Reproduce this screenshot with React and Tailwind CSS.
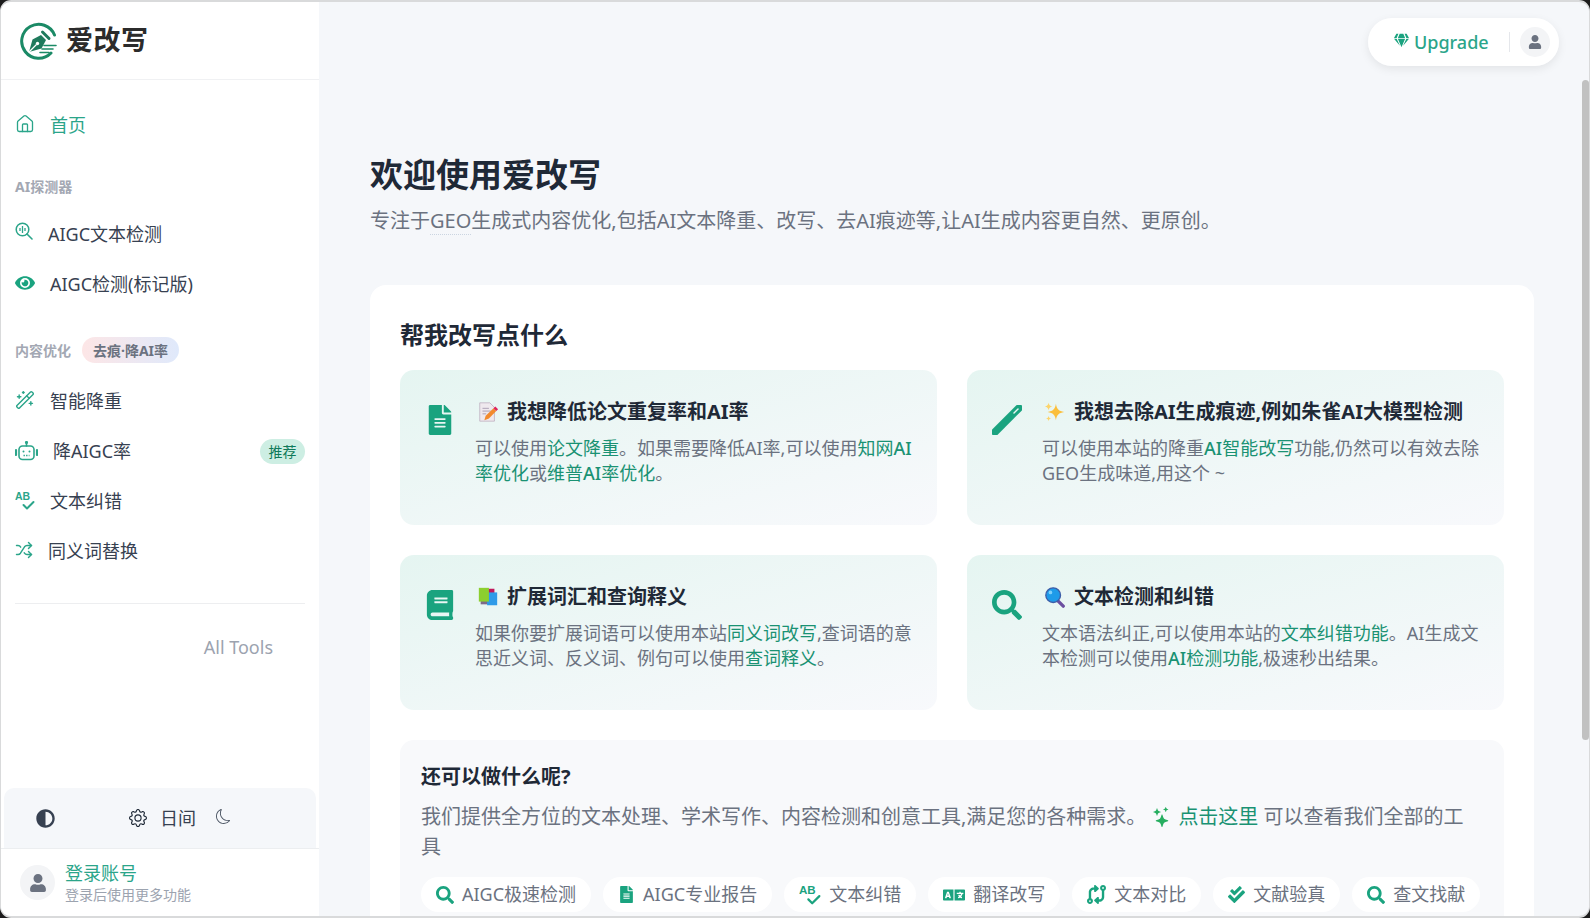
import React from 'react';
import { FaFileAlt, FaBook, FaSearch, FaEye, FaAdjust, FaUser, FaGem, FaLanguage, FaCheckDouble } from 'react-icons/fa';
import { FaCodeCompare } from 'react-icons/fa6';
import { BsGear, BsMoon, BsStars } from 'react-icons/bs';
import { WandSparkles, Shuffle, House } from 'lucide-react';

const G = '#1aa37f';

function Logo() {
  return (
    <svg viewBox="0 0 38 38" className="w-[38px] h-[38px] shrink-0">
      <path d="M34.5 13 A17 17 0 1 0 31 31" fill="none" stroke="#1b8a66" strokeWidth="3" strokeLinecap="round" />
      <path d="M9 30 L12.5 17.5 L21 13 L26 18 L21.5 26.5 Z" fill="#1f7a5c" />
      <path d="M9 30 L16.5 22.5" stroke="#fff" strokeWidth="1.2" />
      <circle cx="17.5" cy="21.5" r="1.7" fill="#fff" />
      <path d="M22.5 10 L29 16.5" stroke="#1f7a5c" strokeWidth="3" strokeLinecap="round" />
      <path d="M24 23.5 H36 M22 27 H33 M20 30.5 H29" stroke="#1b8a66" strokeWidth="1.6" strokeLinecap="round" />
    </svg>
  );
}

function ZoomIcon() {
  return (
    <svg viewBox="0 0 18 18" className="w-[18px] h-[18px] shrink-0 -mt-[6px]" fill="none" stroke="#2ba58a">
      <circle cx="7.5" cy="7.5" r="6.3" strokeWidth="1.5" />
      <path d="M12 12 L17 17" strokeWidth="1.6" strokeLinecap="round" />
      <path d="M7.5 4 V11 M5 6 V9 M10 6 V9" strokeWidth="1.3" />
    </svg>
  );
}

function BotIcon() {
  return (
    <svg viewBox="0 0 23 20" className="w-[23px] h-[20px] shrink-0" fill="none" stroke="#2ba58a" strokeWidth="1.6">
      <rect x="4" y="5" width="15" height="13.5" rx="3.5" />
      <path d="M11.5 5 V1.8" strokeLinecap="round" />
      <circle cx="11.5" cy="1.5" r="0.8" fill="#2ba58a" />
      <path d="M1 9 V14 M22 9 V14" strokeWidth="2.2" strokeLinecap="round" />
      <circle cx="8.5" cy="10.5" r="1" fill="#2ba58a" stroke="none" />
      <circle cx="14.5" cy="10.5" r="1" fill="#2ba58a" stroke="none" />
      <path d="M8.5 14.5 H14.5" strokeDasharray="1.4 1.2" />
    </svg>
  );
}

function AbIcon({ size = 20, color = '#2ba58a' }) {
  return (
    <svg viewBox="0 0 20 20" width={size} height={size} className="shrink-0">
      <text x="0" y="9" fontSize="10.5" fontWeight="700" fill={color} fontFamily="'Liberation Sans', sans-serif">AB</text>
      <path d="M8.5 14 L12 17.5 L18.5 11" fill="none" stroke={color} strokeWidth="2" strokeLinecap="round" strokeLinejoin="round" />
    </svg>
  );
}

function NavItem({ icon, label, right, active }) {
  return (
    <div className="h-[50px] flex items-center gap-[15px]">
      {icon}
      <span className={`text-[18px] ${active ? 'text-[#2ba58a]' : 'text-[#374151]'}`}>{label}</span>
      {right}
    </div>
  );
}

function PenIcon() {
  return (
    <svg viewBox="0 0 30 30" className="w-[30px] h-[30px] shrink-0 mt-[7px]">
      <path d="M3 27 L27 3" stroke={G} strokeWidth="7.5" strokeLinecap="round" />
      <path d="M22 8 L26 4" stroke="#e8f6f2" strokeWidth="1.5" strokeLinecap="round" />
    </svg>
  );
}

function MemoEmoji() {
  return (
    <svg viewBox="0 0 26 24" className="w-[26px] h-[22px] shrink-0">
      <path d="M4 2 H15 L20 7 V22 H4 Z" fill="#efe9ee" stroke="#b9a9bb" strokeWidth="0.8" />
      <path d="M7 8 H14 M7 11 H16 M7 14 H11" stroke="#a99bb2" strokeWidth="1" />
      <path d="M9 21 L10.5 16 L19 8 L22 11 L14 19 Z" fill="#f28a2e" />
      <path d="M19 8 L21 6 L24 9 L22 11 Z" fill="#e0245e" />
    </svg>
  );
}

function SparkEmoji() {
  return (
    <svg viewBox="0 0 26 24" className="w-[26px] h-[22px] shrink-0" fill="#fbbf3c">
      <path d="M14 3 C15 9 17 11 23 12 C17 13 15 15 14 21 C13 15 11 13 5 12 C11 11 13 9 14 3 Z" />
      <path d="M6 2 C6.5 4.5 7.5 5.5 10 6 C7.5 6.5 6.5 7.5 6 10 C5.5 7.5 4.5 6.5 2 6 C4.5 5.5 5.5 4.5 6 2 Z" fill="#fcd46a" />
      <path d="M6 16 C6.4 18 7 18.6 9 19 C7 19.4 6.4 20 6 22 C5.6 20 5 19.4 3 19 C5 18.6 5.6 18 6 16 Z" fill="#fcd46a" />
    </svg>
  );
}

function BooksEmoji() {
  return (
    <svg viewBox="0 0 26 24" className="w-[26px] h-[22px] shrink-0">
      <rect x="9" y="3" width="11" height="15" fill="#c2185b" />
      <rect x="5" y="14" width="14" height="6" fill="#7d6b8a" />
      <rect x="12" y="7" width="11" height="14" fill="#2f9be8" />
      <rect x="3" y="2" width="11" height="15" fill="#8ccf2f" />
    </svg>
  );
}

function LensEmoji() {
  return (
    <svg viewBox="0 0 26 24" className="w-[26px] h-[22px] shrink-0">
      <path d="M14 14 L22 22" stroke="#6b4fa0" strokeWidth="3.6" strokeLinecap="round" />
      <circle cx="11" cy="10" r="8" fill="#1e9be9" stroke="#3d5ea8" strokeWidth="1.5" />
      <circle cx="8" cy="7" r="2" fill="#7fd0fa" />
    </svg>
  );
}

const L = ({ children }) => <span className="text-[#1a9273]">{children}</span>;
const LB = ({ children }) => <span className="text-[#1a9273] font-medium">{children}</span>;

function Feature({ icon, emoji, title, children }) {
  return (
    <div className="h-[155px] rounded-[14px] bg-linear-to-br from-[#e5f5f1] to-[#f8f9fc] pl-[25px] pr-[20px] pt-[28px] flex gap-[20px]">
      {icon}
      <div className="min-w-0">
        <div className="flex items-center h-[28px] gap-[6px]">
          {emoji}
          <span className="text-[20px] font-bold text-[#1f2937] whitespace-nowrap">{title}</span>
        </div>
        <p className="mt-[10px] text-[18px] leading-[25px] text-[#6b7280]">{children}</p>
      </div>
    </div>
  );
}

function Pill({ icon, label }) {
  return (
    <div className="h-[35px] rounded-full bg-white px-[15px] flex items-center gap-[8px] whitespace-nowrap">
      {icon}
      <span className="text-[18px] text-[#6b7280]">{label}</span>
    </div>
  );
}

export default function App() {
  return (
    <div className="h-[918px] w-[1590px] bg-[#1c1c1c] overflow-hidden font-['Noto_Sans','Noto_Sans_CJK_SC',sans-serif]">
      <div className="relative h-full rounded-[11px] border-y-2 border-x border-[#d9dadb] overflow-hidden flex bg-[#f5f7fa]">
        <aside className="w-[318px] shrink-0 h-full bg-white flex flex-col">
          <div className="h-[78px] shrink-0 border-b border-[#f0f1f3] flex items-center pl-[19px] gap-[8px]">
            <Logo />
            <span className="text-[27px] font-bold text-[#2b2b2b] tracking-[0.5px]">爱改写</span>
          </div>
          <nav className="px-[14px] pt-[20px] flex flex-col">
            <NavItem active label="首页" icon={<House size={20} color="#2ba58a" strokeWidth={1.6} className="shrink-0 -mt-[2px]" />} />
            <div className="mt-[26px] mb-[13px] h-[20px] flex items-center text-[14px] font-bold text-[#a3a8b3]">AI探测器</div>
            <NavItem label="AIGC文本检测" icon={<ZoomIcon />} />
            <NavItem label="AIGC检测(标记版)" icon={<FaEye size={20} color={G} className="shrink-0 -mt-[2px]" />} />
            <div className="mt-[28px] mb-[13px] h-[26px] flex items-center gap-[11px]">
              <span className="text-[14px] font-bold text-[#a3a8b3]">内容优化</span>
              <span className="h-[26px] px-[11px] rounded-full bg-linear-to-r from-[#fde6e6] to-[#dfe9fb] flex items-center text-[14px] font-bold text-[#6b7280]">去痕·降AI率</span>
            </div>
            <NavItem label="智能降重" icon={<WandSparkles size={20} color="#2ba58a" strokeWidth={1.7} className="shrink-0 -mt-[2px]" />} />
            <NavItem label="降AIGC率" icon={<BotIcon />} right={<span className="ml-auto h-[25px] w-[45px] rounded-full bg-[#cdeee3] text-[#0f7a5a] text-[14px] flex items-center justify-center">推荐</span>} />
            <NavItem label="文本纠错" icon={<AbIcon />} />
            <NavItem label="同义词替换" icon={<Shuffle size={18} color="#2ba58a" strokeWidth={1.9} className="shrink-0 -mt-[2px]" />} />
            <div className="mt-[27px] h-px bg-[#edeef0]" />
            <div className="mt-[31px] h-[24px] pr-[32px] flex items-center justify-end text-[18px] text-[#9ca3af]">All Tools</div>
          </nav>
          <div className="mt-auto">
            <div className="mx-[3px] h-[60px] rounded-t-[10px] bg-[#f5f7fa] flex items-center text-[#374151]">
              <FaAdjust size={19} className="ml-[32px] text-[#374151]" />
              <BsGear size={18} className="ml-[74px] text-[#1f2937]" />
              <span className="ml-[13px] text-[18px]">日间</span>
              <BsMoon size={15} className="ml-[20px] text-[#4b5563] -mt-[3px]" />
            </div>
            <div className="h-[68px] border-t border-[#eceef0] pl-[19px] flex items-center gap-[10px]">
              <div className="w-[35px] h-[35px] rounded-full bg-[#f3f4f6] flex items-center justify-center">
                <FaUser size={18} color="#6b7280" />
              </div>
              <div className="flex flex-col">
                <span className="text-[18px] leading-[24px] text-[#2ba58a]">登录账号</span>
                <span className="text-[14px] leading-[20px] text-[#9ca3af]">登录后使用更多功能</span>
              </div>
            </div>
          </div>
        </aside>

        <main className="flex-1 min-w-0 h-full overflow-hidden pl-[51px] pr-[55px] pt-[151px]">
          <h1 className="text-[33px] leading-[44px] font-bold text-[#1f2937]">欢迎使用爱改写</h1>
          <p className="mt-[9px] text-[20px] leading-[30px] text-[#6b7280] whitespace-nowrap">
            专注于<span className="border-b border-dotted border-[#cbd5e1]">GEO</span>生成式内容优化,包括AI文本降重、改写、去AI痕迹等,让AI生成内容更自然、更原创。
          </p>
          <section className="mt-[49px] rounded-t-[16px] bg-white px-[30px] pt-[30px]">
            <h2 className="h-[40px] flex items-center text-[24px] font-bold text-[#1f2937]">帮我改写点什么</h2>
            <div className="mt-[15px] grid grid-cols-2 gap-[30px]">
              <Feature icon={<FaFileAlt size={30} color={G} className="shrink-0 mt-[7px]" />} emoji={<MemoEmoji />} title="我想降低论文重复率和AI率">
                可以使用<L>论文降重</L>。如果需要降低AI率,可以使用<L>知网</L><LB>AI</LB><L>率优化</L>或<L>维普</L><LB>AI</LB><L>率优化</L>。
              </Feature>
              <Feature icon={<PenIcon />} emoji={<SparkEmoji />} title="我想去除AI生成痕迹,例如朱雀AI大模型检测">
                可以使用本站的降重<LB>AI</LB><L>智能改写</L>功能,仍然可以有效去除GEO生成味道,用这个 ~
              </Feature>
              <Feature icon={<FaBook size={30} color={G} className="shrink-0 mt-[7px]" />} emoji={<BooksEmoji />} title="扩展词汇和查询释义">
                如果你要扩展词语可以使用本站<L>同义词改写</L>,查词语的意思近义词、反义词、例句可以使用<L>查词释义</L>。
              </Feature>
              <Feature icon={<FaSearch size={30} color={G} className="shrink-0 mt-[7px]" />} emoji={<LensEmoji />} title="文本检测和纠错">
                文本语法纠正,可以使用本站的<L>文本纠错功能</L>。AI生成文本检测可以使用<LB>AI</LB><L>检测功能</L>,极速秒出结果。
              </Feature>
            </div>
            <div className="mt-[30px] rounded-[14px] bg-[#f8f9fb] px-[21px] pt-[23px] pb-[20px]">
              <h3 className="h-[28px] flex items-center text-[20px] font-bold text-[#1f2937]">还可以做什么呢?</h3>
              <p className="mt-[11px] text-[20px] leading-[30px] text-[#6b7280]">
                我们提供全方位的文本处理、学术写作、内容检测和创意工具,满足您的各种需求。
                <BsStars size={20} color="#27ae60" className="inline-block ml-[6px] mr-[6px] -mt-[4px]" />
                <span className="text-[#1a9273]">点击这里</span> 可以查看我们全部的工具
              </p>
              <div className="mt-[15px] flex gap-[12px]">
                <Pill icon={<FaSearch size={18} color={G} />} label="AIGC极速检测" />
                <Pill icon={<FaFileAlt size={17} color={G} />} label="AIGC专业报告" />
                <Pill icon={<AbIcon size={22} color={G} />} label="文本纠错" />
                <Pill icon={<FaLanguage size={22} color={G} />} label="翻译改写" />
                <Pill icon={<FaCodeCompare size={19} color={G} />} label="文本对比" />
                <Pill icon={<FaCheckDouble size={17} color={G} />} label="文献验真" />
                <Pill icon={<FaSearch size={18} color={G} />} label="查文找献" />
              </div>
            </div>
          </section>
        </main>

        <div className="absolute top-[16px] right-[30px] h-[48px] w-[191px] rounded-full bg-white/95 shadow-[0_3px_10px_rgba(0,0,0,0.08)] flex items-center pl-[26px]">
          <FaGem size={15} color={G} className="-mt-[3px]" />
          <span className="ml-[5px] text-[18px] font-medium text-[#2ba58a]">Upgrade</span>
          <div className="ml-[20px] h-[20px] w-px bg-[#e5e7eb]" />
          <div className="ml-[10px] w-[30px] h-[30px] rounded-full bg-[#f3f4f6] flex items-center justify-center">
            <FaUser size={14} color="#6b7280" />
          </div>
        </div>

        <div className="absolute right-0 top-[78px] w-[7px] h-[660px] rounded-full bg-[#c1c1c1]" />
      </div>
    </div>
  );
}
